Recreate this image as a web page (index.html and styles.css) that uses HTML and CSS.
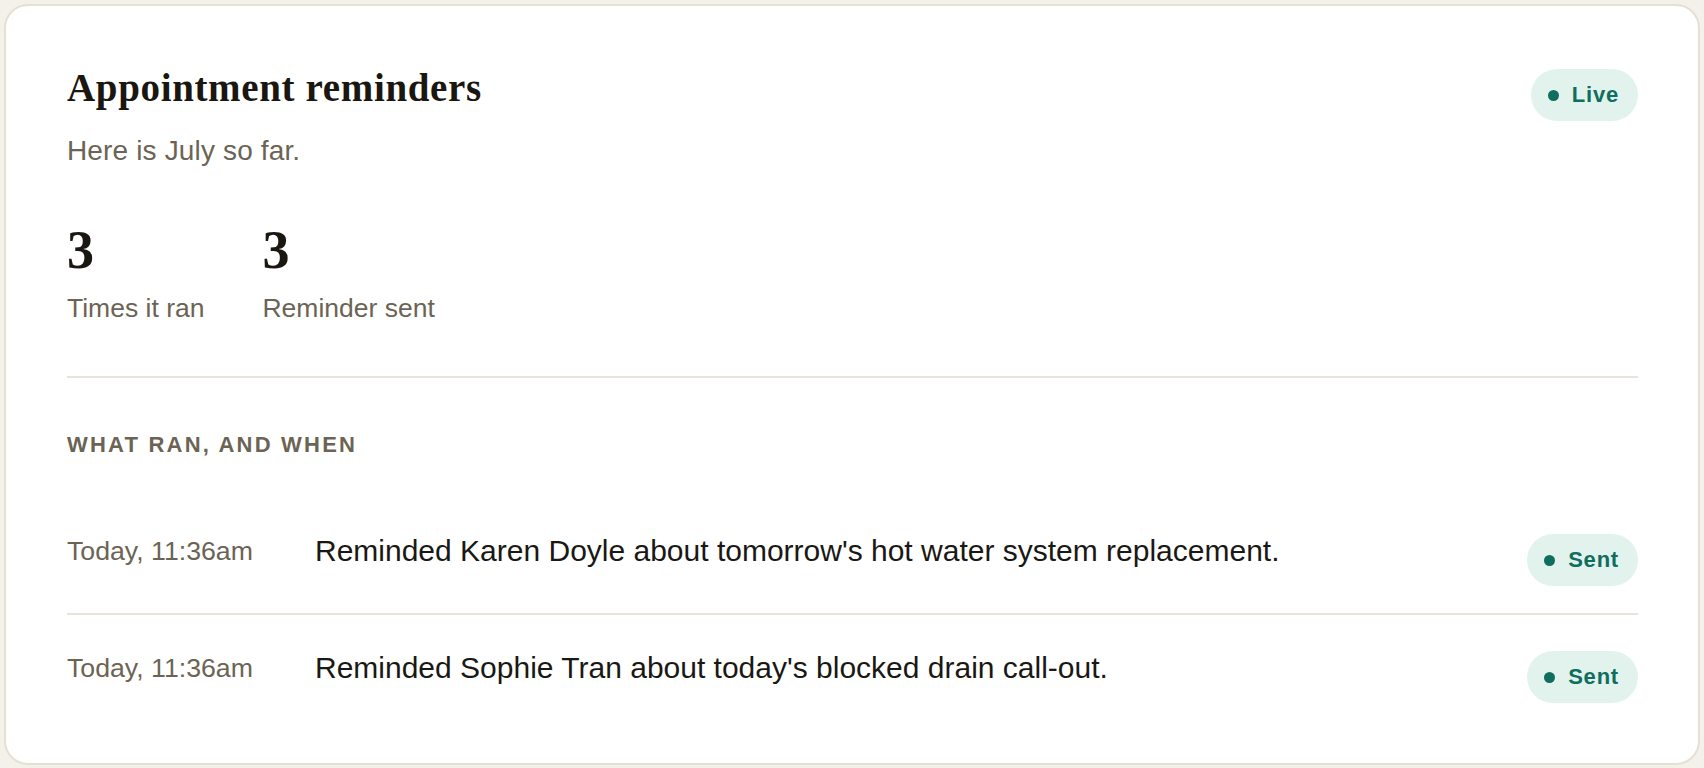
FILE: index.html
```html
<!DOCTYPE html>
<html lang="en">

<head>
    <meta charset="UTF-8">
    <meta name="viewport" content="width=device-width, initial-scale=1.0">
    <title>Appointment reminders</title>
    <link rel="stylesheet" href="styles.css">
</head>

<body>
    <div class="card">
        <div class="card-head">
            <div>
                <h1 class="title">Appointment reminders</h1>
                <p class="subtitle">Here is July so far.</p>
            </div>
            <span class="pill pill-live"><span class="dot"></span>Live</span>
        </div>

        <div class="stats">
            <div class="stat">
                <div class="stat-value">3</div>
                <div class="stat-label">Times it ran</div>
            </div>
            <div class="stat">
                <div class="stat-value">3</div>
                <div class="stat-label">Reminder sent</div>
            </div>
        </div>

        <div class="log">
            <h2 class="log-title">What ran, and when</h2>
            <div class="log-row">
                <span class="log-time">Today, 11:36am</span>
                <span class="log-text">Reminded Karen Doyle about tomorrow's hot water system replacement.</span>
                <span class="pill"><span class="dot"></span>Sent</span>
            </div>
            <div class="log-row">
                <span class="log-time">Today, 11:36am</span>
                <span class="log-text">Reminded Sophie Tran about today's blocked drain call-out.</span>
                <span class="pill"><span class="dot"></span>Sent</span>
            </div>
        </div>
    </div>
</body>

</html>
```

FILE: styles.css
```css
body {
    margin: 0;
    padding: 4px;
    background-color: #f4f1ea;
    font-family: "Liberation Sans", Arial, sans-serif;
    color: #1a1814;
}
.card {
    background-color: #fff;
    border: 2px solid #e6dfd3;
    border-radius: 24px;
    padding: 58px 60px 60px 61px;
}
.card-head {
    display: flex;
    justify-content: space-between;
    align-items: flex-start;
}
.title {
    font-family: "Liberation Serif", "Times New Roman", serif;
    font-size: 39px;
    line-height: 47px;
    font-weight: bold;
    letter-spacing: 0.65px;
    color: #1a1610;
    margin: 0;
}
.subtitle {
    font-size: 28px;
    line-height: 39px;
    letter-spacing: 0.15px;
    color: #6b6454;
    margin: 20px 0 0;
}
.pill {
    display: inline-flex;
    align-items: center;
    height: 52px;
    box-sizing: border-box;
    padding: 0 19px 0 17px;
    border-radius: 26px;
    background-color: #e2f3ee;
    color: #0f6e5d;
    font-size: 22px;
    font-weight: bold;
    letter-spacing: 0.8px;
    flex-shrink: 0;
}
.pill-live {
    margin-top: 5px;
}
.log-row .pill {
    margin-top: 2px;
}
.dot {
    width: 11px;
    height: 11px;
    border-radius: 50%;
    background-color: #0f6e5d;
    margin-right: 13px;
}

.stats {
    display: flex;
    gap: 58px;
    margin-top: 53px;
    padding-bottom: 50px;
    border-bottom: 2px solid #e9e4da;
}
.stat-value {
    font-family: "Liberation Serif", "Times New Roman", serif;
    font-size: 54px;
    line-height: 54px;
    font-weight: bold;
    color: #1a1610;
}
.stat-label {
    font-size: 26.5px;
    line-height: 36px;
    color: #6b6454;
    margin-top: 13px;
}

.log-title {
    font-size: 22px;
    line-height: 26px;
    font-weight: bold;
    text-transform: uppercase;
    letter-spacing: 2.2px;
    color: #6b6454;
    margin: 54px 0 40px;
}
.log-row {
    display: flex;
    align-items: flex-start;
    padding: 34px 0 27px;
    border-bottom: 2px solid #e9e4da;
}
.log-row:last-child {
    border-bottom: none;
    padding-bottom: 0;
}
.log-time {
    flex: 0 0 248px;
    font-size: 26.7px;
    line-height: 38px;
    color: #6b6454;
}
.log-text {
    flex-grow: 1;
    font-size: 30px;
    line-height: 38px;
}
```
